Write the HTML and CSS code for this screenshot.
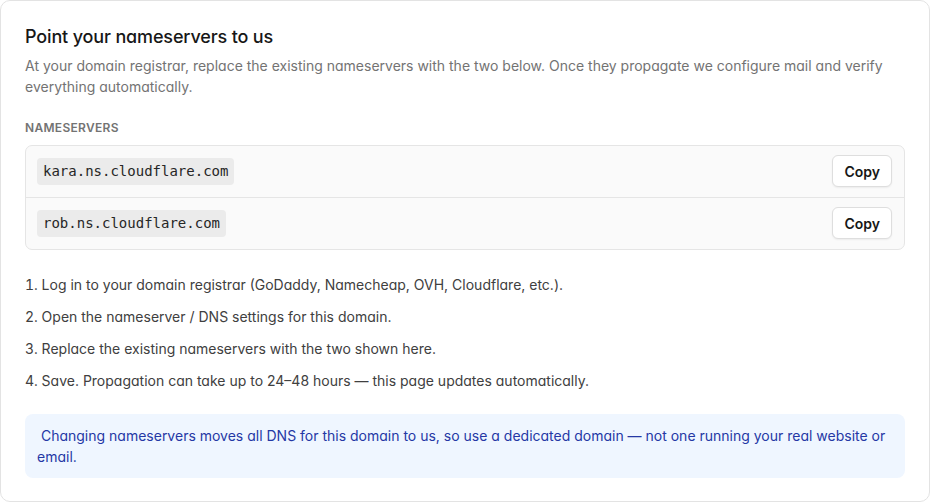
FILE: index.html
```html
<!DOCTYPE html>
<html lang="en">

<head>
    <meta charset="UTF-8">
    <meta name="viewport" content="width=device-width, initial-scale=1.0">
    <title>Nameservers</title>
    <link rel="stylesheet" href="styles.css">
</head>

<body>
    <div class="ns_card">
        <h2>Point your nameservers to us</h2>
        <p class="intro">At your domain registrar, replace the existing nameservers with the two below. Once they propagate we configure mail and verify everything automatically.</p>

        <div class="section_label">NAMESERVERS</div>
        <ul class="ns_list">
            <li>
                <code>kara.ns.cloudflare.com</code>
                <button class="copy_btn" type="button">Copy</button>
            </li>
            <li>
                <code>rob.ns.cloudflare.com</code>
                <button class="copy_btn" type="button">Copy</button>
            </li>
        </ul>

        <ol class="steps">
            <li>Log in to your domain registrar (GoDaddy, Namecheap, OVH, Cloudflare, etc.).</li>
            <li>Open the nameserver / DNS settings for this domain.</li>
            <li>Replace the existing nameservers with the two shown here.</li>
            <li>Save. Propagation can take up to 24–48 hours — this page updates automatically.</li>
        </ol>

        <div class="note">&nbsp;Changing nameservers moves all DNS for this domain to us, so use a dedicated domain — not one running your real website or email.</div>
    </div>
</body>

</html>
```

FILE: styles.css
```css
body {
    font-family: Inter, "Noto Sans", sans-serif;
    font-feature-settings: "cv11";
    background-color: #fff;
    margin: 0;
    padding: 0;
}

.ns_card {
    width: 930px;
    height: 502px;
    box-sizing: border-box;
    padding: 24px;
    background-color: #fff;
    border: 1px solid #e3e3e3;
    border-radius: 10px;
}

h2 {
    margin: 0;
    font-size: 18px;
    line-height: 24px;
    font-weight: 500;
    letter-spacing: -0.15px;
    color: #171717;
}

.intro {
    margin: 6px 0 0;
    font-size: 14px;
    line-height: 21px;
    color: #737373;
}

.section_label {
    margin-top: 23px;
    font-size: 12px;
    line-height: 16px;
    font-weight: 600;
    letter-spacing: 0.3px;
    color: #737373;
}

.ns_list {
    list-style-type: none;
    margin: 9px 0 0;
    padding: 0;
    background-color: #fafafa;
    border: 1px solid #e5e5e5;
    border-radius: 7px;
}

.ns_list li {
    display: flex;
    justify-content: space-between;
    align-items: center;
    padding: 9px 12px 10px 11px;
}

.ns_list li + li {
    border-top: 1px solid #e5e5e5;
}

code {
    font-family: "DejaVu Sans Mono", monospace;
    font-size: 14px;
    line-height: 17px;
    color: #262626;
    background-color: #ebebeb;
    padding: 5px 6px;
    border-radius: 4px;
}

.copy_btn {
    height: 32px;
    padding: 0 11px;
    font-family: inherit;
    font-feature-settings: "cv11";
    font-size: 14px;
    font-weight: 600;
    color: #171717;
    background-color: #fff;
    border: 1px solid #dedede;
    border-radius: 6px;
    box-shadow: 0 1px 2px rgba(0, 0, 0, 0.06);
    cursor: pointer;
}

.steps {
    list-style-position: inside;
    margin: 25px 0 0;
    padding: 0;
    font-size: 14px;
    line-height: 20px;
    color: #404040;
}

.steps li {
    margin-bottom: 12px;
}

.steps li:last-child {
    margin-bottom: 0;
}

.note {
    margin-top: 23px;
    padding: 11px 12px;
    font-size: 14px;
    line-height: 21px;
    color: #2538a5;
    background-color: #eff6ff;
    border-radius: 8px;
}
```
